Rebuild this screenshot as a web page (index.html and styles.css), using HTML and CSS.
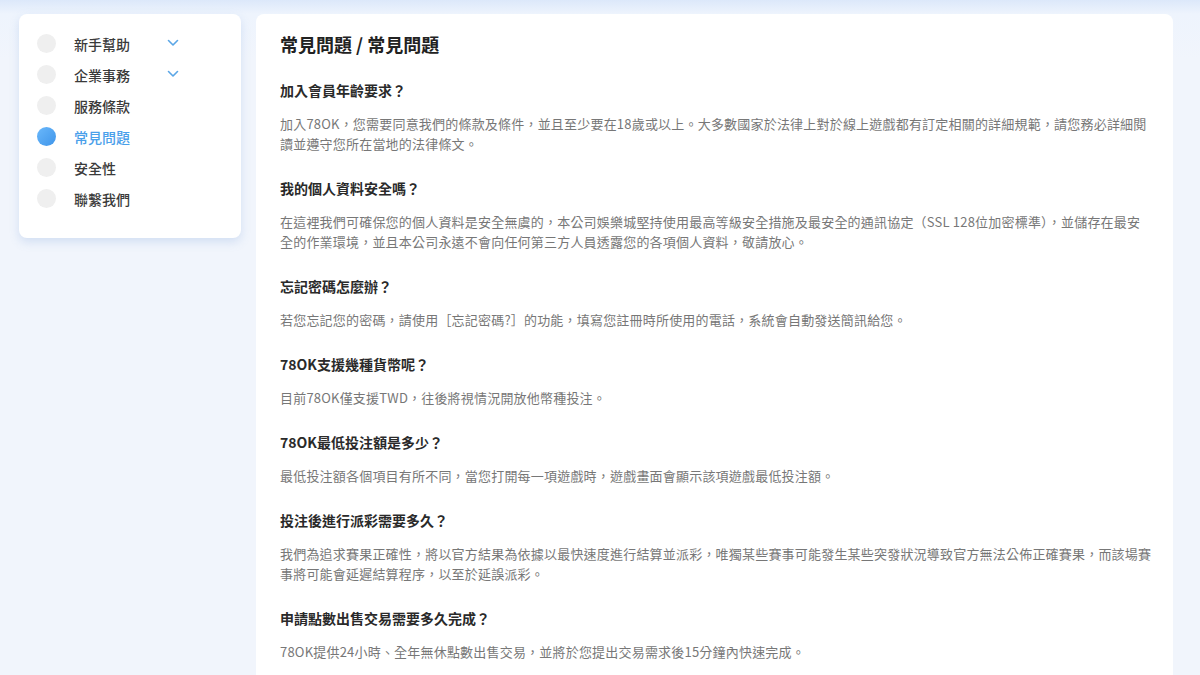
FILE: index.html
```html
<!DOCTYPE html>
<html>
 <head>
  <meta charset="UTF-8">
  <title>常見問題</title>
  <link rel="stylesheet" href="styles.css">
 </head>
 <body>
  <div class="page">
   <div class="side">
    <ul class="menu">
     <li><span class="dot"></span><span class="name">新手幫助</span><svg class="arrow" width="12" height="8" viewBox="0 0 12 8"><path d="M1.5 1.5 L6 6 L10.5 1.5" fill="none" stroke="#5aa6e6" stroke-width="1.6" stroke-linecap="round" stroke-linejoin="round"/></svg></li>
     <li><span class="dot"></span><span class="name">企業事務</span><svg class="arrow" width="12" height="8" viewBox="0 0 12 8"><path d="M1.5 1.5 L6 6 L10.5 1.5" fill="none" stroke="#5aa6e6" stroke-width="1.6" stroke-linecap="round" stroke-linejoin="round"/></svg></li>
     <li><span class="dot"></span><span class="name">服務條款</span></li>
     <li class="current"><span class="dot"></span><span class="name">常見問題</span></li>
     <li><span class="dot"></span><span class="name">安全性</span></li>
     <li><span class="dot"></span><span class="name">聯繫我們</span></li>
    </ul>
   </div>
   <div class="main">
    <h1 class="title">常見問題 / 常見問題</h1>
    <div class="qa">
     <h3>加入會員年齡要求？</h3>
     <p>加入78OK，您需要同意我們的條款及條件，並且至少要在18歲或以上。大多數國家於法律上對於線上遊戲都有訂定相關的詳細規範，請您務必詳細閱讀並遵守您所在當地的法律條文。</p>
    </div>
    <div class="qa">
     <h3>我的個人資料安全嗎？</h3>
     <p>在這裡我們可確保您的個人資料是安全無虞的，本公司娛樂城堅持使用最高等級安全措施及最安全的通訊協定（SSL 128位加密標準），並儲存在最安全的作業環境，並且本公司永遠不會向任何第三方人員透露您的各項個人資料，敬請放心。</p>
    </div>
    <div class="qa">
     <h3>忘記密碼怎麼辦？</h3>
     <p>若您忘記您的密碼，請使用［忘記密碼?］的功能，填寫您註冊時所使用的電話，系統會自動發送簡訊給您。</p>
    </div>
    <div class="qa">
     <h3>78OK支援幾種貨幣呢？</h3>
     <p>目前78OK僅支援TWD，往後將視情況開放他幣種投注。</p>
    </div>
    <div class="qa">
     <h3>78OK最低投注額是多少？</h3>
     <p>最低投注額各個項目有所不同，當您打開每一項遊戲時，遊戲畫面會顯示該項遊戲最低投注額。</p>
    </div>
    <div class="qa">
     <h3>投注後進行派彩需要多久？</h3>
     <p>我們為追求賽果正確性，將以官方結果為依據以最快速度進行結算並派彩，唯獨某些賽事可能發生某些突發狀況導致官方無法公佈正確賽果，而該場賽事將可能會延遲結算程序，以至於延誤派彩。</p>
    </div>
    <div class="qa">
     <h3>申請點數出售交易需要多久完成？</h3>
     <p>78OK提供24小時、全年無休點數出售交易，並將於您提出交易需求後15分鐘內快速完成。</p>
    </div>
   </div>
  </div>
 </body>
</html>
```

FILE: styles.css
```css
*{
 margin: 0;
 padding: 0;
 box-sizing: border-box;
}
body{
 background: linear-gradient(#dce8fa 0px, #eef4fd 14px, #f1f5fc 60px);
 font-family: "Noto Sans CJK TC", "Noto Sans", sans-serif;
 color: #333;
 overflow: hidden;
 height: 675px;
}
.page{
 display: flex;
 align-items: flex-start;
 gap: 15px;
 padding: 14px 27px 0 19px;
}
.side{
 width: 222px;
 flex: none;
 background: #fff;
 border-radius: 8px;
 box-shadow: 0 4px 10px rgba(120, 160, 220, 0.25);
 padding: 14px 0 24px 18px;
}
.menu{
 list-style: none;
}
.menu li{
 display: flex;
 align-items: center;
 height: 31px;
 font-size: 14px;
 font-weight: 500;
 color: #3a3a3a;
}
.menu .dot{
 width: 19px;
 height: 19px;
 border-radius: 50%;
 background: #efefef;
 margin-right: 18px;
}
.menu .name{
 width: 93px;
}
.menu .arrow{
 margin-top: -2px;
}
.menu .current{
 color: #4aa0ea;
}
.menu .current .dot{
 background: linear-gradient(135deg, #6ab8fb, #3f95ea);
}
.main{
 flex: 1;
 min-height: 700px;
 background: #fff;
 border-radius: 8px;
 padding: 17px 20px 0 24px;
}
.title{
 font-size: 18px;
 line-height: 26px;
 font-weight: 700;
 color: #222;
 margin-bottom: 23px;
}
.qa{
 margin-bottom: 24px;
}
.qa h3{
 font-size: 14px;
 line-height: 20px;
 font-weight: 700;
 color: #2a2a2a;
 margin-bottom: 14px;
}
.qa p{
 font-size: 13px;
 line-height: 20px;
 color: #777;
 letter-spacing: 0.2px;
}
```
